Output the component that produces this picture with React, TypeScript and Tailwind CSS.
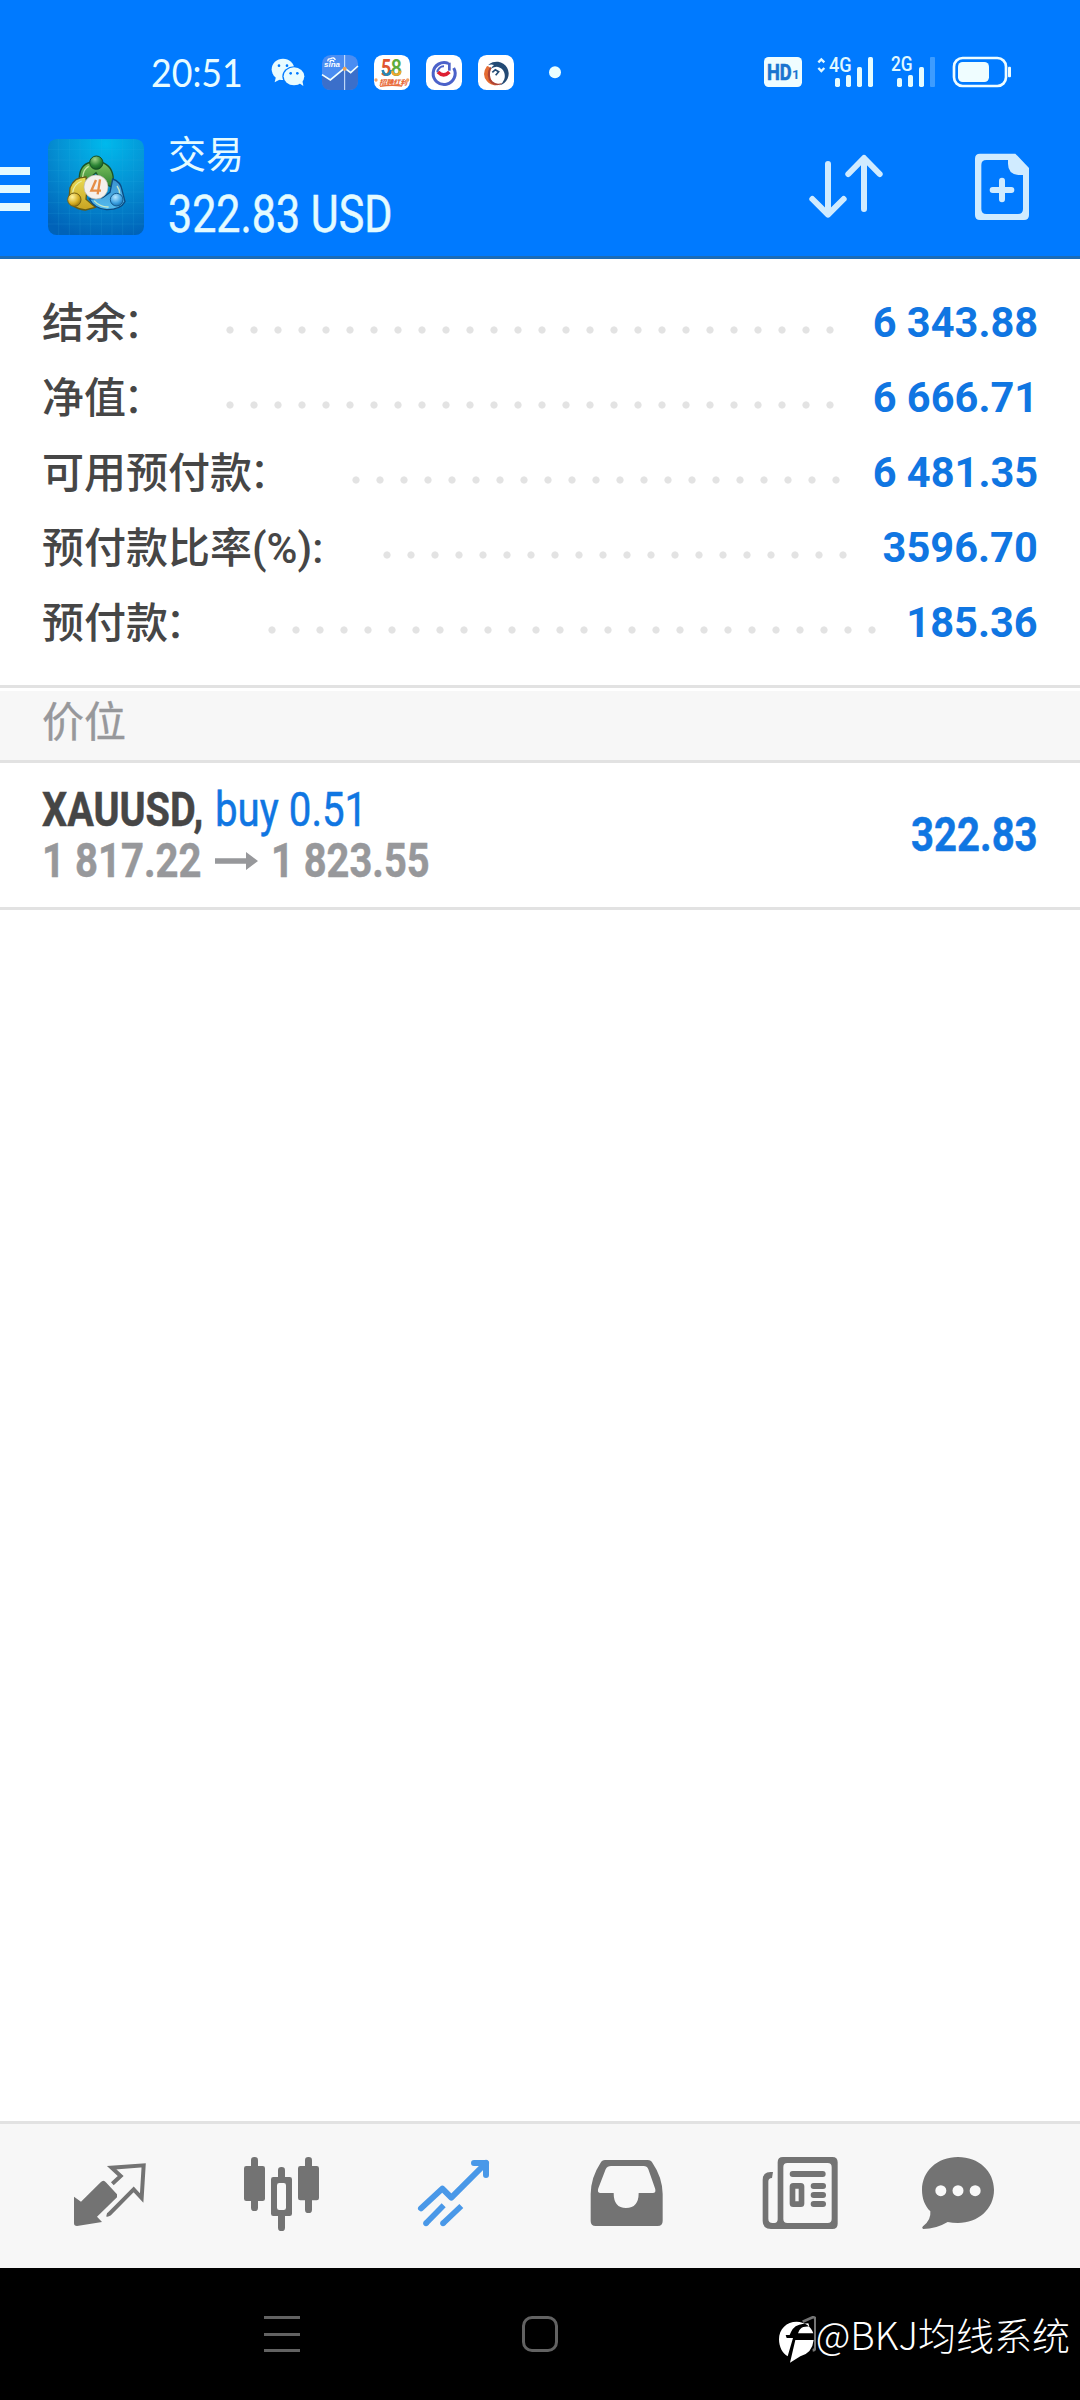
import type { ReactNode } from 'react';

const accountRows = [
  { label: '结余', colon: '：', value: '6 343.88', start: 'pl-[218px]', dots: 'w-[624px]' },
  { label: '净值', colon: '：', value: '6 666.71', start: 'pl-[218px]', dots: 'w-[624px]' },
  { label: '可用预付款', colon: '：', value: '6 481.35', start: 'pl-[344px]', dots: 'w-[504px]' },
  { label: '预付款比率(%):', colon: '', value: '3596.70', start: 'pl-[375px]', dots: 'w-[480px]' },
  { label: '预付款', colon: '：', value: '185.36', start: 'pl-[260px]', dots: 'w-[624px]' },
];

function StatusBar() {
  return (
    <div className="flex h-[70px] w-full">
      <div className="flex h-full w-[260px] items-center pb-[7px] pl-[151px]">
        <span className="origin-left scale-x-[0.94] font-['Lato'] text-[38px] leading-none text-[#e8fcff]">20:51</span>
      </div>
      <svg className="h-[70px] w-[310px] shrink-0" viewBox="390 0 930 210">
        <g fill="#e8fcff">
          <ellipse cx="459" cy="88" rx="34" ry="32" />
          <path d="M438 110l-4 17 17-9z" />
          <ellipse cx="492" cy="109" rx="35" ry="30" fill="#007aff" />
          <ellipse cx="492" cy="109" rx="31" ry="27" />
          <path d="M506 128l14 10-3-17z" />
        </g>
        <g fill="#007aff">
          <circle cx="447" cy="77" r="4" />
          <circle cx="471" cy="77" r="4" />
          <circle cx="482" cy="100" r="4" />
          <circle cx="502" cy="100" r="4" />
        </g>
        <rect x="576" y="45" width="108" height="105" rx="26" fill="#4a8df2" />
        <path d="M576 104l25 16 43-36 18 14 22-20v46q0 26-26 26h-56q-26 0-26-26z" fill="#3b6fca" />
        <path d="M576 104l25 16 43-36 18 14 22-20" fill="none" stroke="#f0ffff" strokeWidth="5" />
        <path d="M644 45v105" stroke="#d6eaff" strokeWidth="3" />
        <circle cx="644" cy="86" r="6" fill="#f0a65a" />
        <text x="582" y="82" fontFamily="Liberation Sans" fontSize="24" fontWeight="bold" fontStyle="italic" fill="#fff">sina</text>
        <path d="M594 64q-2-8 8-8 10-6 14 4M600 66q0-5 6-5t5 5" fill="none" stroke="#fff" strokeWidth="4" />
        <rect x="732" y="45" width="108" height="105" rx="26" fill="#fff" />
        <g fontFamily="Lato" fontWeight="900" fontSize="66">
          <text x="752" y="107" textLength="32" lengthAdjust="spacingAndGlyphs" fill="#e0552f">5</text>
          <text x="783" y="107" textLength="32" lengthAdjust="spacingAndGlyphs" fill="#5cab3c">8</text>
        </g>
        <path d="M758 90q4 16 14 14t10-14" fill="none" stroke="#2789b5" strokeWidth="8" />
        <path d="M787 92q0 12 12 12t12-12" fill="none" stroke="#f3a52f" strokeWidth="7" />
        <text x="748" y="134" fontFamily="Noto Sans CJK SC" fontSize="21" fontWeight="900" fontStyle="italic" fill="#e96c3c">招聘红利</text>
        <path d="M750 139q34-5 66-1" stroke="#e96c3c" strokeWidth="4" fill="none" />
        <circle cx="738" cy="120" r="5" fill="#f2a268" />
        <circle cx="833" cy="120" r="5" fill="#f2a268" />
        <rect x="888" y="45" width="108" height="105" rx="26" fill="#fff" />
        <path d="M955 70a33 33 0 1 0 16 14" fill="none" stroke="#4c62c9" strokeWidth="9" />
        <path d="M958 68v24" fill="none" stroke="#4c62c9" strokeWidth="8" />
        <path d="M942 79a19 19 0 0 0-20 18" fill="none" stroke="#4c62c9" strokeWidth="6" />
        <path d="M924 96q17 17 34 0" fill="none" stroke="#dd1f32" strokeWidth="11" />
        <rect x="1044" y="45" width="108" height="105" rx="26" fill="#fff" />
        <path d="M1074 76a36 36 0 1 1 34 60 32 32 0 0 0 14-40 24 24 0 0 0-40-8 27 27 0 0 1 10-13q-9-3-18 1z" fill="#234a74" />
        <path d="M1071 78q-18 25 0 46 10 11 27 13-27-20-17-52-5-7-10-7z" fill="#e46b32" />
        <path d="M1084 84q-10 25 3 40 13 12 30 4-13 14-33 2-20-23-4-50z" fill="#ad4234" />
        <path d="M1087 97l9-8 10 6-9 11" fill="none" stroke="#234a74" strokeWidth="5" />
        <circle cx="1275" cy="97" r="18" fill="#eaffff" />
      </svg>
      <svg className="ml-auto mr-[40px] h-[70px] w-[300px] shrink-0" viewBox="0 0 900 210">
        <rect x="72" y="51" width="114" height="90" rx="14" fill="#effdff" />
        <g fontFamily="Roboto" fontWeight="bold" fill="#1b75cf">
          <text x="81" y="120" fontSize="66" textLength="74" lengthAdjust="spacingAndGlyphs" stroke="#1b75cf" strokeWidth="2">HD</text>
          <text x="156" y="118" fontSize="40">1</text>
        </g>
        <path d="M235 67l9-9 9 9M235 84l9 9 9-9" fill="none" stroke="#e0f8ff" strokeWidth="7" />
        <g fontFamily="Roboto" fontWeight="500" fontSize="60" fill="#e0f8ff">
          <text x="267" y="95" textLength="68" lengthAdjust="spacingAndGlyphs">4G</text>
          <text x="453" y="93" textLength="65" lengthAdjust="spacingAndGlyphs">2G</text>
        </g>
        <g fill="#e6fcff">
          <rect x="285" y="114" width="15" height="27" rx="5" />
          <rect x="318" y="105" width="15" height="36" rx="5" />
          <rect x="351" y="81" width="15" height="60" rx="5" />
          <rect x="384" y="51" width="15" height="90" rx="5" />
          <rect x="471" y="114" width="15" height="27" rx="5" />
          <rect x="504" y="105" width="15" height="36" rx="5" />
          <rect x="537" y="81" width="15" height="60" rx="5" />
        </g>
        <rect x="570" y="51" width="15" height="90" rx="3" fill="#3d9cff" />
        <rect x="642" y="54" width="156" height="84" rx="26" fill="none" stroke="#effdff" strokeWidth="8" />
        <rect x="654" y="66" width="93" height="60" rx="14" fill="#effdff" />
        <rect x="804" y="80" width="9" height="32" rx="3" fill="#effdff" />
      </svg>
    </div>
  );
}

function AppLogo() {
  return (
    <svg className="h-24 w-24 shrink-0" viewBox="144 57 288 288">
      <defs>
        <radialGradient id="sky" cx="0.6" cy="0.05" r="1">
          <stop offset="0" stopColor="#00b9ec" />
          <stop offset="0.5" stopColor="#0590d3" />
          <stop offset="1" stopColor="#0062b8" />
        </radialGradient>
        <linearGradient id="green" x1="0" y1="0" x2="0" y2="1">
          <stop offset="0" stopColor="#80c460" />
          <stop offset="1" stopColor="#2c8030" />
        </linearGradient>
        <linearGradient id="yellow" x1="0" y1="0" x2="0" y2="1">
          <stop offset="0" stopColor="#eadb54" />
          <stop offset="1" stopColor="#c8a321" />
        </linearGradient>
        <linearGradient id="blue" x1="0" y1="0" x2="0" y2="1">
          <stop offset="0" stopColor="#3b93cf" />
          <stop offset="1" stopColor="#54bbee" />
        </linearGradient>
        <radialGradient id="greenHead" cx="0.4" cy="0.25" r="0.8">
          <stop offset="0" stopColor="#a1d48b" />
          <stop offset="0.6" stopColor="#2b8434" />
          <stop offset="1" stopColor="#11551f" />
        </radialGradient>
        <radialGradient id="yellowHead" cx="0.35" cy="0.3" r="0.8">
          <stop offset="0" stopColor="#fff4a0" />
          <stop offset="0.6" stopColor="#d7ae22" />
          <stop offset="1" stopColor="#8a6b0c" />
        </radialGradient>
        <radialGradient id="blueHead" cx="0.4" cy="0.3" r="0.8">
          <stop offset="0" stopColor="#b6e6ff" />
          <stop offset="0.6" stopColor="#3a9fe0" />
          <stop offset="1" stopColor="#11619f" />
        </radialGradient>
      </defs>
      <rect x="144" y="57" width="288" height="288" rx="26" fill="url(#sky)" />
      <path
        d="M176 57v288M208 57v288M240 57v288M272 57v288M304 57v288M336 57v288M368 57v288M400 57v288M144 88h288M144 120h288M144 152h288M144 184h288M144 216h288M144 248h288M144 280h288M144 312h288"
        stroke="#39b2e4"
        strokeOpacity="0.3"
        strokeWidth="1.5"
      />
      <path d="M238 180q-2-45 35-54h30q37 12 37 54l-2 22-30-12-20-32-22 18z" fill="url(#green)" stroke="#1b5428" strokeWidth="4" />
      <path d="M258 171q-35-1-48 32l-3 34q6 28 49 33l30-8-28-24 3-30z" fill="url(#yellow)" stroke="#665d16" strokeWidth="4" />
      <path d="M338 177q24 8 28 33l9 35q-14 25-56 24-36-3-51-32l40-4 22-16z" fill="url(#blue)" stroke="#0b4b82" strokeWidth="4" />
      <path d="M248 171q3-25 18-32M218 218q4-26 27-35M282 242q18 20 44 19M351 198q9 12 8 24" fill="none" stroke="#e8f8c0" strokeOpacity="0.75" strokeWidth="4" />
      <circle cx="289" cy="128" r="20" fill="url(#greenHead)" stroke="#174f25" strokeWidth="3" />
      <circle cx="223" cy="239" r="20" fill="url(#yellowHead)" stroke="#776214" strokeWidth="3" />
      <circle cx="350" cy="239" r="19" fill="url(#blueHead)" stroke="#155b90" strokeWidth="3" />
      <circle cx="288" cy="201" r="36" fill="#f4f0ec" stroke="#b6b7ac" strokeWidth="2" />
      <path d="M288 180l-14 32h29M300 178l-7 45" fill="none" stroke="#e58d46" strokeWidth="7" />
    </svg>
  );
}

function Header() {
  return (
    <header className="h-[259px] border-b-[3px] border-[#1b6cb8] bg-[#007aff] pt-10">
      <StatusBar />
      <div className="flex h-[146px]">
        <div className="flex w-12 flex-col gap-[10px] pt-[57px]">
          <div className="h-2 w-[30px] bg-[#e4faff]" />
          <div className="h-2 w-[30px] bg-[#e4faff]" />
          <div className="h-2 w-[30px] bg-[#e4faff]" />
        </div>
        <div className="pt-[29px]">
          <AppLogo />
        </div>
        <div className="ml-6 flex w-[400px] flex-col text-[#e4fbff]">
          <div className="mt-[18px] font-['Noto_Sans_CJK_SC',sans-serif] text-[38px] leading-[48px]">交易</div>
          <div className="mt-[9px] w-[280px] origin-left scale-x-[0.827] whitespace-nowrap text-[52px] leading-[60px] [-webkit-text-stroke:0.5px_#e4fbff]">322.83 USD</div>
        </div>
        <svg className="ml-auto mt-[10px] h-[140px] w-[300px]" viewBox="0 0 900 420">
          <g fill="none" stroke="#d0ebff" strokeLinecap="round" strokeLinejoin="round">
            <path d="M144 132v150M97 237l47 47 47-47M252 267V118M205 162l47-48 47 48" strokeWidth="18" />
            <path d="M638 210h56M666 182v56" strokeWidth="18" />
          </g>
          <path
            fillRule="evenodd"
            fill="#d0ebff"
            d="M600 101h106l41 43v141q0 15-15 15H600q-15 0-15-15V116q0-15 15-15zM619 120q-15 0-15 15v132q0 15 15 15h95q15 0 15-15V165q-45 3-45-34v-11z"
          />
        </svg>
      </div>
    </header>
  );
}

function AccountSummary() {
  return (
    <section className="h-[426px] pt-[27px] text-[42px] leading-[75px]">
      {accountRows.map((row) => (
        <div key={row.label} className="relative flex h-[75px] justify-between px-[42px]">
          <span className="font-medium text-[#464646]">
            {row.label}
            <span className="relative -left-[3px] font-normal">{row.colon}</span>
          </span>
          <div className={`absolute inset-0 pt-[32px] ${row.start}`}>
            <div className={`h-6 bg-[radial-gradient(circle,#e3e3e3_3.2px,transparent_4px)] bg-[length:24px_24px] ${row.dots}`} />
          </div>
          <span className="relative -top-px origin-right scale-x-[0.99] font-bold text-[#1076e2]">{row.value}</span>
        </div>
      ))}
    </section>
  );
}

function Position() {
  return (
    <section className="flex h-[147px] justify-between border-b-[3px] border-[#e2e2e2] pl-[42px] pr-[42px] pt-[19px] text-[48px]">
      <div>
        <div className="flex h-[51px] leading-[56px] whitespace-nowrap">
          <span className="w-[173px] origin-left scale-x-[0.825] font-bold text-[#464646] [-webkit-text-stroke:0.5px_#464646]">XAUUSD,</span>
          <span className="origin-left scale-x-[0.838] text-[#1076e2] [-webkit-text-stroke:0.5px_#1076e2]">buy 0.51</span>
        </div>
        <div className="flex h-[52px] leading-[56px] whitespace-nowrap font-bold text-[#97989b] [-webkit-text-stroke:0.5px_#97989b]">
          <span className="w-[173px] origin-left scale-x-[0.835]">1 817.22</span>
          <svg className="mt-[10px] h-[36px] w-[44px]" viewBox="0 0 44 36">
            <path d="M0 15.200h31V9l12 9-12 9v-6.200H0z" fill="#97989b" />
          </svg>
          <span className="ml-[12px] origin-left scale-x-[0.83]">1 823.55</span>
        </div>
      </div>
      <span className="mt-[24px] origin-right scale-x-[0.835] font-bold leading-[57px] text-[#1076e2] [-webkit-text-stroke:0.5px_#1076e2]">322.83</span>
    </section>
  );
}

function TabIcon({ viewBox, color, children }: { viewBox: string; color: string; children: ReactNode }) {
  return (
    <svg className={`h-[144px] w-[160px] shrink-0 ${color}`} viewBox={viewBox}>
      {children}
    </svg>
  );
}

function TabBar() {
  return (
    <nav className="flex h-[147px] border-t-[3px] border-[#e2e2e2] bg-[#f7f7f7] px-10">
      <TabIcon viewBox="0 42 480 432" color="text-[#737373]">
        <path d="M190 212q-4 0-8 5l-59 58-21-15v80q0 8 9 8l75-12-15-16 60-58v-9l-32-35q-5-6-9-6z" fill="currentColor" />
        <path d="M217 221l25-23-27-25 96-7-6 98-24-26-73 74q-4 3-8 2" fill="none" stroke="currentColor" strokeWidth="12" />
      </TabIcon>
      <TabIcon viewBox="480 42 480 432" color="text-[#737373]">
        <g fill="currentColor">
          <rect x="633" y="141" width="21" height="162" rx="10" />
          <rect x="612" y="168" width="63" height="105" rx="7" />
          <rect x="795" y="141" width="21" height="168" rx="10" />
          <rect x="774" y="168" width="63" height="103" rx="7" />
          <rect x="714" y="171" width="21" height="192" rx="10" />
          <rect x="693" y="201" width="63" height="117" rx="7" />
        </g>
        <rect x="711" y="219" width="27" height="81" rx="7" fill="#f9f9f9" />
      </TabIcon>
      <TabIcon viewBox="960 42 480 432" color="text-[#4998e8]">
        <g fill="none" stroke="currentColor" strokeWidth="18" strokeLinejoin="round">
          <path d="M1143 295l64-59 27 27 104-104" strokeLinecap="round" />
          <path d="M1302 159h36v36" strokeLinecap="round" />
        </g>
        <path d="M1211 286l-53 54M1264 288l-55 52" stroke="currentColor" strokeWidth="17" />
        <circle cx="1158" cy="340" r="8.500" fill="currentColor" />
        <circle cx="1209" cy="340" r="8.500" fill="currentColor" />
      </TabIcon>
      <div className="w-10 shrink-0" />
      <TabIcon viewBox="0 42 480 432" color="text-[#737373]">
        <path
          fillRule="evenodd"
          fill="currentColor"
          d="M135 150h128q10 0 15 10 29 42 30 92v81q0 15-15 15H107q-15 0-15-15v-81q1-50 29-92 5-10 14-10zM153 168q-11 0-16 10l-22 57q-5 14 7 14h39q0 45 37 45 38 0 38-45h42q12 0 7-14l-20-57q-4-10-14-10z"
        />
      </TabIcon>
      <TabIcon viewBox="480 42 480 432" color="text-[#737373]">
        <path
          fillRule="evenodd"
          fill="currentColor"
          d="M669 141h148q16 0 16 16v184q0 16-16 16H633q-25 0-25-25V210q0-24 24-24h7l-3 18q-11 0-11 11v111q0 13 13 13h5q10 0 10-11V157q0-16 16-16zM682 159q-12 0-12 12v156q0 12 12 12h121q12 0 12-12V171q0-12-12-12z"
        />
        <g fill="currentColor">
          <rect x="689" y="183" width="108" height="18" rx="9" />
          <rect x="752" y="219" width="46" height="18" rx="9" />
          <rect x="752" y="246" width="46" height="18" rx="9" />
          <rect x="752" y="273" width="46" height="18" rx="9" />
        </g>
        <rect x="697.500" y="227.500" width="27" height="55" rx="2" fill="none" stroke="currentColor" strokeWidth="17" />
      </TabIcon>
      <TabIcon viewBox="960 42 480 432" color="text-[#737373]">
        <path d="M1194 141c62 0 108 42 108 99s-48 99-108 99q-17 0-31-3-35 21-74 21-5-4 0-8 25-19 22-45c-17-17-25-39-25-64 0-57 46-99 108-99z" fill="currentColor" />
        <g fill="#f9f9f9">
          <circle cx="1142.500" cy="242" r="16.500" />
          <circle cx="1194" cy="242" r="16.500" />
          <circle cx="1245.500" cy="242" r="16.500" />
        </g>
      </TabIcon>
    </nav>
  );
}

function SystemBar() {
  return (
    <footer className="relative flex h-[132px] justify-between bg-black px-[264px] pt-[48px]">
      <div className="flex h-9 w-9 flex-col justify-between">
        <div className="h-[3px] bg-[#626262]" />
        <div className="h-[3px] bg-[#626262]" />
        <div className="h-[3px] bg-[#626262]" />
      </div>
      <div className="h-9 w-9 rounded-[10px] border-[3px] border-[#626262]" />
      <div className="w-9" />
      <div className="absolute right-[10px] top-[38px] flex items-start">
        <svg className="h-[60px] w-[38px]" viewBox="108 138 114 180">
          <path d="M164 185c24 0 44 15 50 35h-46l4-9q5-10 18-11l12-1-3-9-14 1q-29 3-38 25l-4 9h-12l3 9h19l-16 55c-15-8-26-28-26-51 0-31 23-53 53-53z" fill="#fff" />
          <path d="M160 240h55q-4 39-40 49l-31 19z" fill="#fff" />
          <path d="M182 185l30-13q8-2 8 8v82q0 8-8 9" fill="none" stroke="#747474" strokeWidth="8" />
        </svg>
        <span className="-mt-[2px] font-['Noto_Sans_CJK_SC',sans-serif] text-[38px] font-light leading-[60px] whitespace-nowrap text-white">@BKJ均线系统</span>
      </div>
    </footer>
  );
}

export default function App() {
  return (
    <main className="flex h-[2400px] w-[1080px] flex-col overflow-hidden bg-white font-['Roboto','Noto_Sans_CJK_SC',sans-serif]">
      <Header />
      <AccountSummary />
      <div className="h-[78px] border-y-[3px] border-[#e2e2e2] bg-white pt-[3px]">
        <div className="h-[69px] bg-[#f7f7f7] pl-[42px] text-[42px] leading-[63px] text-[#97989b] [-webkit-text-stroke:0.4px_#97989b]">价位</div>
      </div>
      <Position />
      <div className="flex-1" />
      <TabBar />
      <SystemBar />
    </main>
  );
}
